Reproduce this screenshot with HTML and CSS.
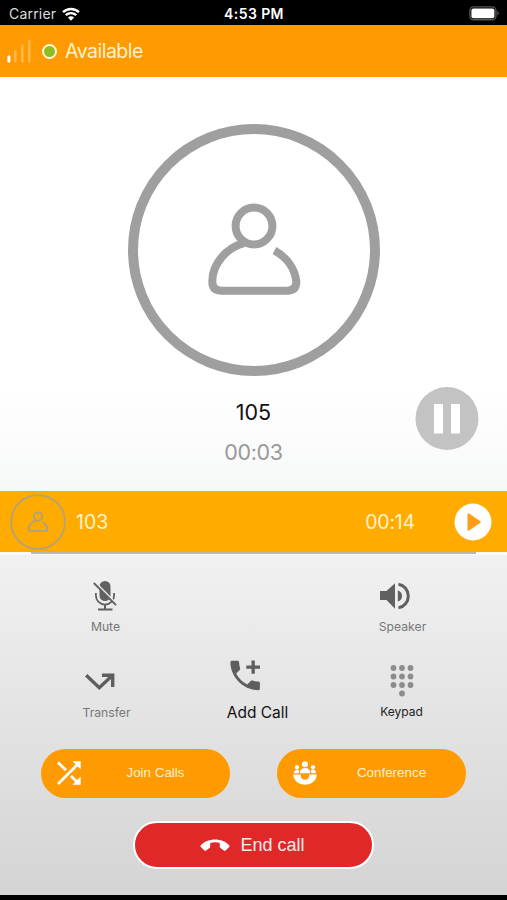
FILE: index.html
```html
<!DOCTYPE html>
<html lang="en">
<head>
    <meta charset="UTF-8">
    <meta name="viewport" content="width=device-width, initial-scale=1.0">
    <title>Call</title>
    <link rel="stylesheet" href="styles.css">
</head>
<body>
    <!-- Phone status bar -->
    <div class="status-bar">
        <div class="carrier">
            <span>Carrier</span>
            <svg width="18" height="14" viewBox="0 0 18 14" fill="none" stroke="#fff" stroke-width="2.4">
                <path d="M1 5.2a11.6 11.6 0 0 1 16 0"/>
                <path d="M3.8 8.2a7.5 7.5 0 0 1 10.4 0"/>
                <path d="M9 13.8 5.9 10.6a4.4 4.4 0 0 1 6.2 0z" fill="#fff" stroke="none"/>
            </svg>
        </div>
        <span class="clock">4:53 PM</span>
        <svg class="battery" width="30" height="15" viewBox="0 0 30 15">
            <rect x="0.9" y="0.9" width="26" height="12.8" rx="3.6" fill="none" stroke="#555" stroke-width="1.4"/>
            <rect x="2.4" y="2.4" width="23" height="9.8" rx="2" fill="#fff"/>
            <path d="M28.2 5c2 .6 2 4 0 4.6z" fill="#555"/>
        </svg>
    </div>

    <!-- Account status -->
    <div class="header">
        <svg width="25" height="24" viewBox="0 0 25 24">
            <rect x="0.4" y="16.5" width="3" height="7" rx="1" fill="#fff"/>
            <g fill="#ffb64a">
                <rect x="7" y="11" width="2.6" height="12.5" rx="1"/>
                <rect x="14" y="5.5" width="2.6" height="18" rx="1"/>
                <rect x="21" y="0.5" width="2.6" height="23" rx="1"/>
            </g>
        </svg>
        <span class="dot"></span>
        <span class="presence">Available</span>
    </div>

    <!-- Active call -->
    <div class="call">
        <svg class="avatar" width="252" height="252" viewBox="0 0 252 252" fill="none" stroke="#9f9f9f">
            <circle cx="126" cy="126" r="121" stroke-width="10"/>
            <g stroke-width="8">
                <circle cx="126" cy="102" r="18.4"/>
                <path d="M116 119.2C98 124 84.3 140 84.3 157.5Q84.3 166.7 93.5 166.7H159Q168.3 166.7 168.3 157.5C167 145 159 133.500 146.5 126.5"/>
            </g>
        </svg>
        <div class="number">105</div>
        <div class="timer">00:03</div>
        <button class="pause" aria-label="Pause">
            <svg width="64" height="64" viewBox="0 0 64 64">
                <circle cx="32" cy="31.5" r="31.5" fill="#c3c3c3"/>
                <path d="M19 17h9v29.5h-9zM36 17h9v29.5h-9z" fill="#fff"/>
            </svg>
        </button>
    </div>

    <!-- Call on hold -->
    <div class="held">
        <svg width="56" height="56" viewBox="0 0 252 252" fill="none" stroke="#b2a27a">
            <circle cx="126" cy="126" r="121" stroke-width="8"/>
            <g stroke-width="9">
                <circle cx="126" cy="102" r="18.4"/>
                <path d="M116 119.2C98 124 84.3 140 84.3 157.5Q84.3 166.7 93.5 166.7H159Q168.3 166.7 168.3 157.5C167 145 159 133.500 146.5 126.5"/>
            </g>
        </svg>
        <span class="held-number">103</span>
        <span class="held-time">00:14</span>
        <svg width="38" height="38" viewBox="0 0 38 38">
            <circle cx="19" cy="19" r="18.5" fill="#fff"/>
            <path d="M14.5 11.3v15.4l11.3-7.7z" fill="#ff9e16" stroke="#ff9e16" stroke-width="2" stroke-linejoin="round"/>
        </svg>
    </div>
    <div class="divider"></div>

    <!-- Call controls -->
    <div class="panel">
        <div class="controls">
            <div class="control mute">
                <svg width="24" height="32" viewBox="0 0 24 32" fill="none" stroke="#606060">
                    <rect x="6.5" y="1" width="11" height="20" rx="5.5" fill="#606060" stroke="none"/>
                    <path d="M2.900 13v2.500a9.100 9.100 0 0 0 18.200 0V13" stroke-width="1.800"/>
                    <path d="M12 24.500v4.500M5 29.500h14.500" stroke-width="2"/>
                    <path d="M2.500 2.800 24 24.300" stroke="#ececec" stroke-width="2"/>
                    <path d="M.800 3 23 25.200" stroke-width="1.900"/>
                </svg>
                <span>Mute</span>
            </div>
            <div class="control speaker">
                <svg width="32" height="28" viewBox="0 0 32 28">
                    <path d="M0 9h6.500L15 1.300v25.400L6.500 18H0zM17.800 8.500a5.700 5.700 0 0 1 0 11z" fill="#606060"/>
                    <path d="M18.500 2.200a12 12 0 0 1 0 23.600" fill="none" stroke="#606060" stroke-width="3"/>
                </svg>
                <span>Speaker</span>
            </div>
            <div class="control transfer">
                <svg width="30" height="20" viewBox="0 0 30 20" fill="none" stroke="#5e5e5e" stroke-width="3.400">
                    <path d="M1.200 3.200 14.300 15.700 27 3.800"/>
                    <path d="M17 3.200h10.700V15"/>
                </svg>
                <span>Transfer</span>
            </div>
            <div class="control add-call">
                <svg width="31" height="31" viewBox="0 0 31 31" fill="#5e5e5e">
                    <path d="M2 .7h5.500c.9 0 1.600.7 1.600 1.600 0 2 .4 4 1 5.900.2.600 0 1.300-.4 1.700l-3.500 3.500a25 25 0 0 0 11 11l3.500-3.500c.5-.5 1.100-.6 1.700-.4 1.900.6 3.900 1 5.900 1 .9 0 1.600.7 1.600 1.600v5.500c0 .9-.7 1.600-1.600 1.600C13.500 30.200.4 17.100.4 2.300.4 1.400 1.100.7 2 .7z"/>
                    <path d="M21.500.5h3.300v5h5.200v3.300h-5.200v5h-3.300v-5h-5.200V5.500h5.200z"/>
                </svg>
                <span>Add Call</span>
            </div>
            <div class="control keypad">
                <svg width="24" height="34" viewBox="0 0 24 34" fill="#8c8c8c">
                    <circle cx="3.500" cy="4" r="2.900"/><circle cx="12" cy="4" r="2.900"/><circle cx="20.500" cy="4" r="2.900"/>
                    <circle cx="3.500" cy="12.500" r="2.900"/><circle cx="12" cy="12.500" r="2.900"/><circle cx="20.500" cy="12.500" r="2.900"/>
                    <circle cx="3.500" cy="21" r="2.900"/><circle cx="12" cy="21" r="2.900"/><circle cx="20.500" cy="21" r="2.900"/>
                    <circle cx="12" cy="29.500" r="2.900"/>
                </svg>
                <span>Keypad</span>
            </div>
        </div>

        <div class="actions">
            <button class="action">
                <svg width="24" height="24" viewBox="0 0 24 24" fill="none" stroke="#fff" stroke-width="2.800">
                    <path d="M1 1.500 9 9.200M1 23 21 3M14 15l7 7"/>
                    <path d="M15.500.3H23.700v8.200zM15.500 23.700H23.700v-8.200z" fill="#fff" stroke="none"/>
                </svg>
                <span>Join Calls</span>
            </button>
            <button class="action">
                <svg width="24" height="24" viewBox="0 0 24 24" fill="#fff">
                    <circle cx="12" cy="3.200" r="3"/>
                    <circle cx="4" cy="6.200" r="2.100"/>
                    <circle cx="20" cy="6.200" r="2.100"/>
                    <path d="M6.800 12.200c0-7 10.400-7 10.400 0z"/>
                    <path d="M1 12.200c0-4.300 4.600-4.500 5.200-2.200L5.500 12.200zM23 12.200c0-4.300-4.600-4.500-5.200-2.200l.7 2.200z"/>
                    <path d="M.3 13.600h7.500c-1 7 9.400 7 8.400 0h7.500C23.500 27 .5 27 .3 13.600z"/>
                </svg>
                <span>Conference</span>
            </button>
        </div>

        <button class="end-call">
            <svg width="30" height="13" viewBox="0 0 30 13">
                <path d="M15 .5C9.500.5 4.200 2.600.8 6.200c-.5.600-.5 1.200 0 1.700l3.600 3.600c.5.500 1.200.5 1.700.1l3.400-2.500c.5-.4.700-.8.700-1.400V4c3-1 6.600-1 9.600 0v3.700c0 .6.2 1 .7 1.400l3.400 2.500c.5.400 1.200.4 1.700-.1l3.600-3.600c.5-.5.500-1.100 0-1.700C25.800 2.600 20.500.5 15 .5z" fill="#fff"/>
            </svg>
            <span>End call</span>
        </button>
    </div>
</body>
</html>
```
FILE: styles.css
```css
* {
    box-sizing: border-box;
}
body {
    margin: 0;
    height: 900px;
    display: flex;
    flex-direction: column;
    overflow: hidden;
    background-color: #000;
    font-family: Inter, "Liberation Sans", sans-serif;
}
svg {
    display: block;
    flex-shrink: 0;
}
button {
    padding: 0;
    border: none;
    font-family: "Liberation Sans", Arial, sans-serif;
    cursor: pointer;
}
.status-bar {
    height: 25px;
    display: grid;
    grid-template-columns: 1fr auto 1fr;
    align-items: center;
    padding: 2px 8px 0 9px;
    color: #fff;
    font-size: 14px;
}
.carrier {
    display: flex;
    align-items: center;
    gap: 6px;
    color: #ddd;
    letter-spacing: 0.2px;
}
.clock {
    font-weight: 600;
    letter-spacing: 0.4px;
}
.battery {
    justify-self: end;
}
.header {
    height: 52px;
    display: flex;
    align-items: center;
    padding-left: 7px;
    background-color: #ff9b00;
    color: #fff1d2;
}
.dot {
    width: 15px;
    height: 15px;
    margin: 0 8px 0 10px;
    border: 2px solid #fff6d5;
    border-radius: 50%;
    background-color: #91bd20;
}
.presence {
    font-size: 19.5px;
    letter-spacing: -0.5px;
}
.call {
    position: relative;
    height: 414px;
    display: flex;
    flex-direction: column;
    align-items: center;
    padding-top: 47px;
    background: linear-gradient(#fff 75%, #f7f8f8);
}
.number {
    margin-top: 22px;
    font-size: 21.5px;
    line-height: 28px;
    color: #111;
}
.timer {
    margin-top: 12px;
    font-size: 21.5px;
    line-height: 28px;
    letter-spacing: -0.3px;
    color: #999;
}
/* pause floats beside the number */
.pause {
    position: absolute;
    right: 28px;
    bottom: 40px;
    background: none;
}
.held {
    height: 61px;
    display: flex;
    align-items: center;
    padding: 0 15px 0 10px;
    background-color: #ffab00;
    color: #fff3cf;
    font-size: 19.5px;
}
.held-number {
    margin-left: 10px;
}
.held-time {
    margin-left: auto;
    margin-right: 39px;
    letter-spacing: -0.2px;
}
.divider {
    height: 3px;
    padding: 0 31px;
    background-color: #fafafa;
}
.divider::before {
    content: "";
    display: block;
    height: 2px;
    background-color: #b9b9b4;
}
.panel {
    height: 340px;
    display: flex;
    flex-direction: column;
    align-items: center;
    background: linear-gradient(#f1f1f1, #d4d4d4);
}
.controls {
    width: 444px;
    display: grid;
    grid-template-columns: repeat(3, 148px);
    grid-template-rows: 80px 86px;
}
.control {
    display: flex;
    flex-direction: column;
    align-items: center;
    justify-content: flex-end;
    color: #777;
    font-size: 12.2px;
    line-height: 16px;
}
.mute svg {
    margin: 0 1px 7px 0;
}
.speaker {
    grid-column: 3;
    padding-left: 2px;
}
.speaker svg {
    margin: 0 14px 9px 0;
}
.transfer {
    padding-left: 2px;
}
.transfer svg {
    margin: 0 14px 13px 0;
}
.add-call {
    padding-left: 8px;
    color: #111;
    font-size: 15.5px;
}
.add-call svg {
    margin: 0 24px 14px 0;
}
.keypad {
    padding-bottom: 1px;
    color: #222;
    font-size: 12px;
}
.keypad svg {
    margin-bottom: 6px;
}
.actions {
    display: flex;
    gap: 47px;
    margin-top: 28px;
}
.action {
    width: 189px;
    height: 49px;
    display: flex;
    align-items: center;
    padding: 0 0 2px 16px;
    border-radius: 25px;
    background-color: #ff9b00;
    color: #fff1d2;
    font-size: 13.4px;
}
.action span {
    width: 152px;
    text-align: center;
}
.end-call {
    width: 241px;
    height: 48px;
    display: flex;
    align-items: center;
    justify-content: center;
    gap: 10px;
    margin-top: 23px;
    padding-right: 2px;
    border: 2.5px solid #fff;
    border-radius: 24px;
    background-color: #e02828;
    color: #ffeaea;
    font-size: 18px;
}
```
